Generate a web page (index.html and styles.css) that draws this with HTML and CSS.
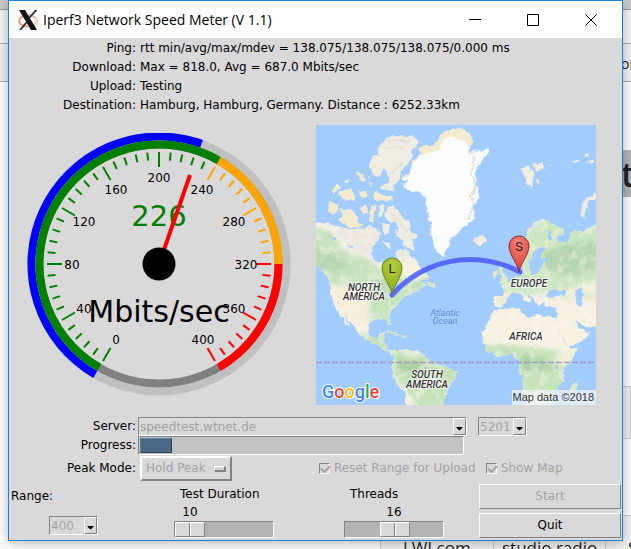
FILE: index.html
```
<!DOCTYPE html>
<html lang="en">
<head>
<meta charset="utf-8">
<title>Iperf3 Network Speed Meter (V 1.1)</title>
<link rel="stylesheet" href="styles.css">
</head>
<body>
<div class="backdrop">
  <div class="backdrop-bar"></div>
  <div class="backdrop-tabs"></div>
  <div class="backdrop-tools"><span>or</span></div>
  <div class="backdrop-page">
    <span class="backdrop-heading">t</span>
    <div class="backdrop-band"></div>
    <div class="backdrop-links"><span>LWJ.com</span><span>studio radio</span><span>S</span></div>
  </div>
</div>

<main class="window">
  <header class="titlebar">
    <svg class="app-icon" viewBox="0 0 20 20" aria-hidden="true">
      <ellipse cx="10" cy="11" rx="9" ry="5.500" fill="none" stroke="#e9a184" stroke-width="2"/>
      <path d="M11 16.500Q18 16 19 10.500Q18 6 13 5.500" fill="none" stroke="#ead9b4" stroke-width="2"/>
      <path d="M1 0H7L19 20H13Z" fill="#111"/>
      <path d="M17 0H19.500L11.500 9L10.500 7.500ZM1 20H3.500L9.500 12.500L8.500 11Z" fill="#333"/>
    </svg>
    <h1>Iperf3 Network Speed Meter (V 1.1)</h1>
    <div class="caption-buttons">
      <button type="button" aria-label="Minimize"><svg viewBox="0 0 12 12"><path d="M0 5.500H12"/></svg></button>
      <button type="button" aria-label="Maximize"><svg viewBox="0 0 12 12"><path d="M.5 .5H11.500V11.500H.5Z"/></svg></button>
      <button type="button" aria-label="Close"><svg viewBox="0 0 12 12"><path d="M.5 .5L11.500 11.500M11.500 .5L.5 11.500"/></svg></button>
    </div>
  </header>

  <dl class="results">
    <dt>Ping:</dt><dd>rtt min/avg/max/mdev = 138.075/138.075/138.075/0.000 ms</dd>
    <dt>Download:</dt><dd>Max = 818.0, Avg = 687.0 Mbits/sec</dd>
    <dt>Upload:</dt><dd>Testing</dd>
    <dt>Destination:</dt><dd>Hamburg, Hamburg, Germany. Distance : 6252.33km</dd>
  </dl>

  <section class="displays">
    <svg class="gauge" viewBox="-132 -131 264 264" role="img" aria-label="226 Mbits/sec">
      <defs>
        <g id="ticks">
          <path d="M0 -112V-97"/>
          <path d="M0 -112V-104" transform="rotate(6)"/>
          <path d="M0 -112V-104" transform="rotate(12)"/>
          <path d="M0 -112V-104" transform="rotate(18)"/>
          <path d="M0 -112V-104" transform="rotate(24)"/>
        </g>
      </defs>
      <g fill="none" stroke-width="8">
        <circle r="127.500" stroke="#c0c0c0"/>
        <path stroke="#00f" d="M-63.750 110.420A127.500 127.500 0 0 1 42.560 -120.190"/>
        <circle r="119.500" stroke="#808080"/>
        <path stroke="#008000" d="M-59.750 103.490A119.500 119.500 0 1 1 59.750 -103.490"/>
        <path stroke="#ffa500" d="M59.750 -103.490A119.500 119.500 0 0 1 119.500 0"/>
        <path stroke="#f00" d="M119.500 0A119.500 119.500 0 0 1 59.750 103.490"/>
      </g>
      <g stroke-width="2">
        <g stroke="#008000">
          <use href="#ticks" transform="rotate(-150)"/><use href="#ticks" transform="rotate(-120)"/>
          <use href="#ticks" transform="rotate(-90)"/><use href="#ticks" transform="rotate(-60)"/>
          <use href="#ticks" transform="rotate(-30)"/><use href="#ticks"/>
        </g>
        <g stroke="#ffa500"><use href="#ticks" transform="rotate(30)"/><use href="#ticks" transform="rotate(60)"/></g>
        <g stroke="#f00">
          <use href="#ticks" transform="rotate(90)"/><use href="#ticks" transform="rotate(120)"/>
          <path d="M0 -112V-97" transform="rotate(150)"/>
        </g>
      </g>
      <g class="scale">
        <text x="-43" y="80">0</text><text x="-75" y="49">40</text><text x="-87" y="5">80</text>
        <text x="-75" y="-38">120</text><text x="-43" y="-70">160</text><text x="0" y="-82">200</text>
        <text x="43" y="-70">240</text><text x="75" y="-38">280</text><text x="87" y="5">320</text>
        <text x="75" y="49">360</text><text x="44" y="80">400</text>
      </g>
      <text class="reading" x="0" y="-38">226</text>
      <text class="unit" x="0" y="58">Mbits/sec</text>
      <path d="M0 0L31 -89" stroke="#f00" stroke-width="4"/>
      <circle r="16.500"/>
    </svg>

    <svg class="map" viewBox="0 0 280 280" role="img" aria-label="Route map">
      <defs>
        <filter id="coast" x="-5%" y="-5%" width="110%" height="110%">
          <feTurbulence type="fractalNoise" baseFrequency=".16" numOctaves="3" seed="4" result="n"/>
          <feDisplacementMap in="SourceGraphic" in2="n" scale="5" xChannelSelector="R" yChannelSelector="G"/>
        </filter>
        <filter id="mottle" x="0" y="0" width="100%" height="100%">
          <feTurbulence type="fractalNoise" baseFrequency=".035" numOctaves="4" seed="9"/>
          <feColorMatrix values="0 0 0 0 .98  0 0 0 0 .96  0 0 0 0 .89  4 0 0 0 -1.9"/>
        </filter>
        <filter id="soft" x="-20%" y="-20%" width="140%" height="140%"><feGaussianBlur stdDeviation="7"/></filter>
        <radialGradient id="pinL" cx=".5" cy=".2" r=".8"><stop offset="0" stop-color="#b5cf42"/><stop offset="1" stop-color="#8bac12"/></radialGradient>
        <radialGradient id="pinS" cx=".5" cy=".2" r=".8"><stop offset="0" stop-color="#f8857b"/><stop offset="1" stop-color="#dc3a30"/></radialGradient>
        <path id="pin" d="M0 26C-1 18 -10 9 -10 0A10 10 0 0 1 10 0C10 9 1 18 0 26Z"/>
        <clipPath id="lands">
          <path id="namerica" d="M0 305L50 305L75 318L100 320L125 326L145 318L165 326L180 312L195 325L210 340L200 360L185 375L180 400L195 420L215 430L224 455L240 470L248 450L250 425L262 415L252 395L265 385L290 390L300 408L315 415L325 440L345 455L355 470L330 480L315 482L340 486L345 498L325 500L305 520L285 522L270 535L262 550L245 565L234 582L242 608L236 614L226 595L205 593L188 597L172 606L170 630L184 652L200 654L205 636L225 632L217 660L225 668L232 690L255 690L255 700L238 699L212 682L195 670L165 657L150 645L135 622L112 598L98 578L116 618L110 616L84 575L70 550L60 520L60 490L48 465L25 440L0 425Z"/>
          <path id="samerica" d="M250 698L268 684L300 688L330 695L345 713L370 730L400 735L437 755L430 775L412 800L405 828L385 870L285 870L285 820L265 795L245 765L243 738L250 720Z"/>
          <path id="eurasia" d="M632 430L630 385L645 345L650 325L670 305L695 293L730 310L755 325L760 345L735 345L740 360L770 362L782 332L820 330L870 300L870 618L820 615L795 597L805 625L840 632L825 655L770 678L760 655L730 602L738 582L738 560L705 555L700 540L683 556L665 530L648 515L662 540L650 548L630 518L605 515L585 535L570 560L548 555L548 525L580 525L580 505L565 495L595 485L615 465L635 460L638 440Z"/>
          <path id="africa" d="M550 570L575 565L625 560L630 575L655 590L680 580L730 590L745 625L765 670L775 682L803 682L785 715L755 745L760 780L730 805L725 835L710 870L650 870L638 820L635 770L625 740L625 715L600 700L560 708L525 685L513 660L518 630L535 595Z"/>
        </clipPath>
      </defs>
      <rect width="280" height="280" fill="#a3ccff"/>
      <g filter="url(#coast)">
        <g transform="translate(-5 -4) scale(.33333)">
          <g fill="#f6f1e1">
            <use href="#namerica"/><use href="#samerica"/><use href="#eurasia"/><use href="#africa"/>
          </g>
          <g clip-path="url(#lands)"><g filter="url(#soft)">
            <path fill="#ebe9df" d="M40 310L220 310L330 420L200 430L120 390Z"/>
            <path fill="#c6e3bd" d="M0 320L60 330L100 390L180 420L240 470L370 470L320 520L240 590L240 620L170 600L180 510L100 500L40 480L0 440Z"/>
            <path fill="#b5d7af" d="M0 370L60 400L120 430L80 450L20 440ZM170 470L260 480L260 500L190 490Z"/>
            <path fill="#f6eed9" d="M70 500L160 490L175 520L170 600L130 600L70 540Z"/>
            <path fill="#c5e2ba" d="M140 640L230 640L250 700L190 680ZM240 680L420 720L450 780L390 870L330 870L280 800L240 760Z"/>
            <path fill="#acd4a7" d="M260 710L340 720L360 760L290 770L255 735Z"/>
            <path fill="#cbe6c0" d="M630 440L650 330L700 290L880 320L880 470L760 510L640 520L560 510Z"/>
            <path fill="#b5d6b0" d="M700 390L780 370L880 350L880 440L780 470L700 440Z"/>
            <path fill="#e6ead0" d="M550 520L600 530L570 560ZM700 530L880 500L880 540Z"/>
            <path fill="#c6e3ba" d="M500 668L640 675L760 690L760 800L720 870L680 830L640 820L620 720L560 720Z"/>
            <path fill="#aed3a8" d="M620 700L700 710L720 750L640 755ZM550 695L600 690L600 705Z"/>
            <path fill="#f1eed9" d="M740 690L800 690L770 740L740 730ZM660 820L710 810L700 860L660 860Z"/>
          </g>
          <rect x="0" y="0" width="880" height="880" filter="url(#mottle)" opacity=".4"/></g>
          <g fill="#efece2">
            <path d="M200 80L230 50L270 42L310 48L325 65L300 90L305 100L290 130L270 150L265 180L250 195L250 210L210 208L205 195L235 185L230 150L215 140L205 168L185 163L175 130L185 105L202 104Z"/>
            <path d="M205 255L222 250L213 282L202 288ZM225 265L240 255L262 268L275 290L295 300L300 330L320 345L315 358L300 355L312 385L285 380L270 355L255 345L265 320L250 300L235 302L220 285Z"/>
            <path d="M215 305L237 312L232 340L222 346L212 322ZM215 358L235 365L240 382L222 375ZM255 325L262 335L252 333Z"/>
            <path d="M486 350L520 346L526 360L506 375L488 366Z"/>
            <path d="M630 142L655 135L670 155L660 200L650 190L640 168ZM665 128L695 125L698 145L675 152ZM678 168L686 188L675 186Z"/>
            <path d="M870 205L825 235L808 265L810 285L825 295L821 265L840 238L870 224Z"/>
            <path d="M785 122L800 115L800 128ZM815 108L835 95L835 108ZM825 125L845 115L850 125ZM722 126L728 130L722 132Z"/>
          </g>
          <g fill="#f3ebcf">
            <path d="M55 243L85 250L80 270L65 285L50 270ZM85 262L130 268L142 305L158 312L120 322L82 298L95 285Z"/>
            <path d="M88 210L115 203L136 225L130 240L100 235L85 225ZM62 208L78 190L90 200L70 218ZM98 180L118 175L108 190ZM135 150L155 160L162 180L145 175Z"/>
            <path d="M143 210L166 207L166 230L150 230ZM170 185L182 190L178 198ZM170 165L180 170L175 176ZM185 222L195 210L215 222L240 222L243 238L200 240Z"/>
            <path d="M148 260L165 252L172 275L155 286ZM178 253L200 255L192 280L185 310L174 290ZM168 322L180 318L175 335Z"/>
            <path d="M322 85L345 70L355 80L380 60L385 45L405 30L440 20L475 35L490 65L475 80L440 60L380 95L330 105ZM300 120L328 105L328 132L305 135ZM275 165L300 155L300 175L278 182ZM475 90L495 85L490 130L475 130ZM350 262L358 280L366 330L370 345L356 345L358 310Z"/>
          </g>
          <g fill="#dcebc6">
            <path d="M565 425L580 430L575 450L592 475L588 488L565 488L572 470L562 455ZM545 455L558 450L558 472L545 475Z"/>
            <path d="M225 630L250 632L276 645L255 643L230 634ZM272 642L293 648L275 652ZM795 782L800 795L788 822L775 820L778 800ZM345 480L372 485L372 500L350 492Z"/>
          </g>
          <g fill="#a3ccff">
            <path d="M658 462L655 430L662 405L674 388L690 378L703 382L690 402L688 414L722 410L700 424L690 440L672 458L640 470ZM708 334L718 332L724 350L718 362Z"/>
            <path d="M702 526L718 506L735 502L765 514L762 526L740 528ZM792 506L812 500L815 520L808 535L815 555L802 558L796 530Z"/>
            <path d="M58 350L82 346L75 358ZM110 378L128 374L130 382ZM222 490L250 486L262 500L240 506ZM732 735L744 735L738 748Z"/>
          </g>
          <path fill="#fbfcfc" d="M318 112L335 100L388 86L390 60L418 46L465 60L475 100L530 84L535 96L512 118L495 150L497 190L505 212L500 235L486 258L495 290L470 310L440 335L420 352L410 375L400 406L385 400L370 380L362 340L358 310L350 280L348 250L340 230L325 212L296 208L275 195L290 180L275 174L298 160L302 138Z"/>
          <path fill="none" stroke="#e4e2dd" stroke-width="6" d="M490 110L480 160L495 195L480 225L488 250L470 300M230 60L300 60M215 80L280 80M240 160L275 125M650 325L690 300M240 275L290 330"/>
        </g>
      </g>
      <path d="M0 237.500H280" stroke="#a39bc0" stroke-width="1.500" stroke-dasharray="6 2"/>
      <path d="M76 170C98 145 128 134.500 154 134.500C172 134.500 188 138.500 204 147" fill="none" stroke="#4b5cff" stroke-opacity=".88" stroke-width="5" stroke-linecap="round"/>
      <g class="place">
        <text x="48" y="166">NORTH</text><text x="48" y="175">AMERICA</text>
        <text x="111" y="253">SOUTH</text><text x="111" y="263">AMERICA</text>
        <text x="213" y="162">EUROPE</text><text x="210" y="215">AFRICA</text>
      </g>
      <g class="sea"><text x="129" y="191">Atlantic</text><text x="129" y="199">Ocean</text></g>
      <g transform="translate(76 143)"><use href="#pin" fill="url(#pinL)" stroke="#66801a"/><text class="pin-letter" y="5">L</text></g>
      <g transform="translate(203 121)"><use href="#pin" fill="url(#pinS)" stroke="#8c2f2a"/><text class="pin-letter" y="5">S</text></g>
      <text class="google" x="6" y="273"><tspan fill="#4285f4">G</tspan><tspan fill="#ea4335">o</tspan><tspan fill="#fbbc05">o</tspan><tspan fill="#4285f4">g</tspan><tspan fill="#34a853">l</tspan><tspan fill="#ea4335">e</tspan></text>
      <rect x="196" y="265" width="84" height="15" fill="#f2f5f8" fill-opacity=".75"/>
      <text class="credit" x="278" y="276">Map data ©2018</text>
    </svg>
  </section>

  <form class="settings">
    <div class="row">
      <label for="server">Server:</label>
      <span class="combo combo-server"><select id="server" disabled><option>speedtest.wtnet.de</option></select><svg viewBox="0 0 13 17"><path d="M3 9H10V10L7 13H6L3 10Z"/></svg></span>
      <span class="combo combo-small"><select aria-label="Port" disabled><option>5201</option></select><svg viewBox="0 0 13 17"><path d="M3 9H10V10L7 13H6L3 10Z"/></svg></span>
    </div>
    <div class="row row-progress">
      <label for="progress">Progress:</label>
      <progress id="progress" value="10" max="100"></progress>
    </div>
    <div class="row row-mode">
      <label for="mode">Peak Mode:</label>
      <span class="option-menu"><select id="mode" disabled><option>Hold Peak</option></select><i></i></span>
      <label class="check"><input type="checkbox" checked disabled>Reset Range for Upload</label>
      <label class="check"><input type="checkbox" checked disabled>Show Map</label>
    </div>
    <div class="controls">
      <div class="range-cell">
        <label for="range">Range:</label>
        <span class="combo combo-small"><select id="range" disabled><option>400</option></select><svg viewBox="0 0 13 17"><path d="M3 9H10V10L7 13H6L3 10Z"/></svg></span>
      </div>
      <div class="scale-cell">
        <label for="duration">Test Duration</label>
        <output class="at-start" for="duration">10</output>
        <input id="duration" type="range" min="10" max="60" value="10">
      </div>
      <div class="scale-cell">
        <label for="threads">Threads</label>
        <output for="threads">16</output>
        <input id="threads" type="range" min="1" max="30" value="16">
      </div>
      <div class="actions">
        <button type="button" disabled>Start</button>
        <button type="button">Quit</button>
      </div>
    </div>
  </form>
</main>
</body>
</html>
```

FILE: styles.css
```
* { box-sizing: border-box; }

body {
  margin: 0;
  min-height: 100vh;
  overflow: hidden;
  background: #fff;
  color: #000;
  font: 12px/19px "DejaVu Sans", sans-serif;
}

/* Browser page behind the window */
.backdrop {
  position: absolute;
  inset: 0;
  overflow: hidden;
  color: #222;
  font-family: "Open Sans", sans-serif;
}
.backdrop-bar { height: 10px; background: #ccc; border-bottom: 1px solid #999; }
.backdrop-tabs { height: 34px; background: #f7f7f7; border-bottom: 1px solid #aaa; }
.backdrop-tools {
  height: 38px;
  padding: 10px 0 0 621px;
  background: #f2f2f2;
  border-bottom: 1px solid #aaa;
  font-size: 14px;
}
.backdrop-heading {
  position: absolute;
  top: 150px;
  right: 0;
  width: 10px;
  height: 47px;
  background: #b4b4b4;
  font: 600 34px/48px "Open Sans", sans-serif;
}
.backdrop-band {
  position: absolute;
  left: 380px;
  right: 0;
  top: 386px;
  height: 53px;
  background: #f0f0f0;
  border: 1px solid #ccc;
}
.backdrop-links {
  position: absolute;
  left: 380px;
  right: 0;
  top: 515px;
  display: grid;
  grid-template-columns: 113px 112px 1fr;
  background: #f2f2f2;
  border-top: 1px solid #ccc;
}
.backdrop-links span {
  height: 60px;
  padding: 22px 0 0 22px;
  border-left: 1px solid #ccc;
  font-size: 17px;
  white-space: nowrap;
}
.backdrop-links span:nth-child(2) { padding-left: 8px; }

/* Window frame */
.window {
  position: relative;
  margin: 0 8px;
  background: #d9d9d9;
  border: 1px solid #1883d7;
  box-shadow: 0 2px 12px rgba(0, 0, 0, .3);
}
.titlebar {
  display: flex;
  align-items: center;
  height: 37px;
  padding: 0 2px 0 9px;
  background: #fff;
}
.app-icon { width: 20px; height: 20px; }
h1 {
  flex: 1;
  margin: 0 0 0 5px;
  font: 14px/20px "Open Sans", sans-serif;
}
.caption-buttons { display: flex; }
.caption-buttons button {
  width: 58px;
  height: 37px;
  padding: 0;
  border: 0;
  background: none;
}
.caption-buttons svg {
  display: block;
  width: 12px;
  height: 12px;
  margin: 0 auto;
  fill: none;
  stroke: #000;
}

.results {
  display: grid;
  grid-template-columns: 127px 1fr;
  column-gap: 4px;
  margin: 0;
  padding-top: 1px;
}
dt { text-align: right; }
dd { margin: 0; white-space: nowrap; }

/* Gauge and map */
.displays {
  display: flex;
  align-items: center;
  gap: 25px;
  padding: 10px 18px 11px;
}
.gauge { flex: none; width: 264px; height: 264px; }
.map { flex: none; width: 280px; height: 280px; }
.gauge text { text-anchor: middle; }
.scale { font-size: 12px; }
.reading { font-size: 29px; fill: #008000; }
.unit { font-size: 30px; }
.map text { text-anchor: middle; font-family: Roboto, sans-serif; }
.place text {
  font-size: 10px;
  font-style: italic;
  font-weight: 500;
  fill: #333;
  stroke: #fff;
  stroke-width: 2px;
  stroke-opacity: .8;
  paint-order: stroke;
}
.sea text { font-size: 9px; font-style: italic; fill: #5b93d6; }
.map .pin-letter { font-size: 13px; fill: #222; }
.map .google {
  text-anchor: start;
  font: 500 18px Roboto, sans-serif;
  stroke: #fff;
  stroke-width: 2px;
  paint-order: stroke;
}
.map .credit { text-anchor: end; font: 11px "Liberation Sans", sans-serif; fill: #333; }

/* Form */
.row {
  display: grid;
  grid-template-columns: 127px 331px 60px;
  align-items: center;
  height: 19px;
}
.row > label:first-child { text-align: right; line-height: 21px; }
.combo { position: relative; height: 19px; }
.combo-server { margin-left: 2px; }
.combo-small { width: 49px; }
.row .combo-small { margin-left: 11px; }
select {
  display: block;
  width: 100%;
  height: 100%;
  margin: 0;
  padding: 1px 0 0 1px;
  appearance: none;
  background: #d9d9d9;
  border: 1px solid;
  border-color: #828282 #fff #fff #828282;
  border-radius: 0;
  color: #a3a3a3;
  font: 12px/17px "DejaVu Sans", sans-serif;
  opacity: 1;
}
.combo svg {
  position: absolute;
  top: 1px;
  right: 1px;
  width: 13px;
  height: 17px;
  border: 1px solid;
  border-color: #fff #828282 #828282 #fff;
  pointer-events: none;
}
progress {
  display: block;
  width: 326px;
  height: 19px;
  margin-left: 2px;
  padding: 1px;
  appearance: none;
  background: #c3c3c3;
  border: 1px solid;
  border-color: #828282 #fff #fff #828282;
}
progress::-webkit-progress-bar { background: #c3c3c3; }
progress::-webkit-progress-value {
  background: #4a6984;
  border: 1px solid;
  border-color: #5b7d9b #2c3f50 #2c3f50 #5b7d9b;
}
.row-mode {
  grid-template-columns: 127px 183px 167px 1fr;
  height: 29px;
}
.row-mode > label:first-child { line-height: 19px; }
.option-menu { position: relative; width: 92px; height: 25px; margin-left: 4px; }
.option-menu select {
  padding: 0 0 0 4px;
  border-width: 2px;
  border-color: #fff #828282 #828282 #fff;
}
.option-menu i {
  position: absolute;
  top: 10px;
  right: 7px;
  width: 11px;
  height: 5px;
  border: 1px solid;
  border-color: #fff #828282 #828282 #fff;
  box-shadow: 1px 1px 0 #828282;
}
.check { display: flex; align-items: center; gap: 4px; color: #a3a3a3; white-space: nowrap; }
.check input {
  width: 11px;
  height: 11px;
  margin: 0;
  appearance: none;
  border: 1px solid;
  border-color: #828282 #fff #fff #828282;
}
.check input::before {
  content: "";
  display: block;
  width: 7px;
  height: 4px;
  margin: 1px;
  border: solid #a3a3a3;
  border-width: 0 0 2px 2px;
  transform: rotate(-45deg);
}

.controls {
  display: grid;
  grid-template-columns: 165px 170px 135px 1fr;
}
.range-cell { display: grid; padding: 4px 0 0 2px; align-content: start; gap: 10px; }
.range-cell .combo { margin-left: 38px; }
.scale-cell { display: flex; flex-direction: column; width: 100px; padding-top: 2px; }
.scale-cell label { padding-left: 6px; line-height: 18px; }
.scale-cell output { text-align: center; line-height: 18px; }
.scale-cell .at-start { width: 32px; }
input[type="range"] {
  width: 100px;
  height: 17px;
  margin: 0;
  appearance: none;
  background: #b3b3b3;
  border: 1px solid;
  border-color: #828282 #fff #fff #828282;
}
input[type="range"]::-webkit-slider-thumb {
  appearance: none;
  width: 30px;
  height: 15px;
  border: 1px solid;
  border-color: #fff #828282 #828282 #fff;
  background: linear-gradient(90deg, transparent 13px, #828282 13px, #828282 14px, #fff 14px, #fff 15px, transparent 15px) #d9d9d9;
}
.actions { display: grid; gap: 4px; padding: 1px 1px 2px 0; }
.actions button {
  height: 25px;
  padding: 0;
  background: #d9d9d9;
  border: 1px solid;
  border-color: #fff #828282 #828282 #fff;
  border-radius: 0;
  color: #000;
  font: 12px/19px "DejaVu Sans", sans-serif;
}
.actions button:disabled { color: #a3a3a3; }
```
